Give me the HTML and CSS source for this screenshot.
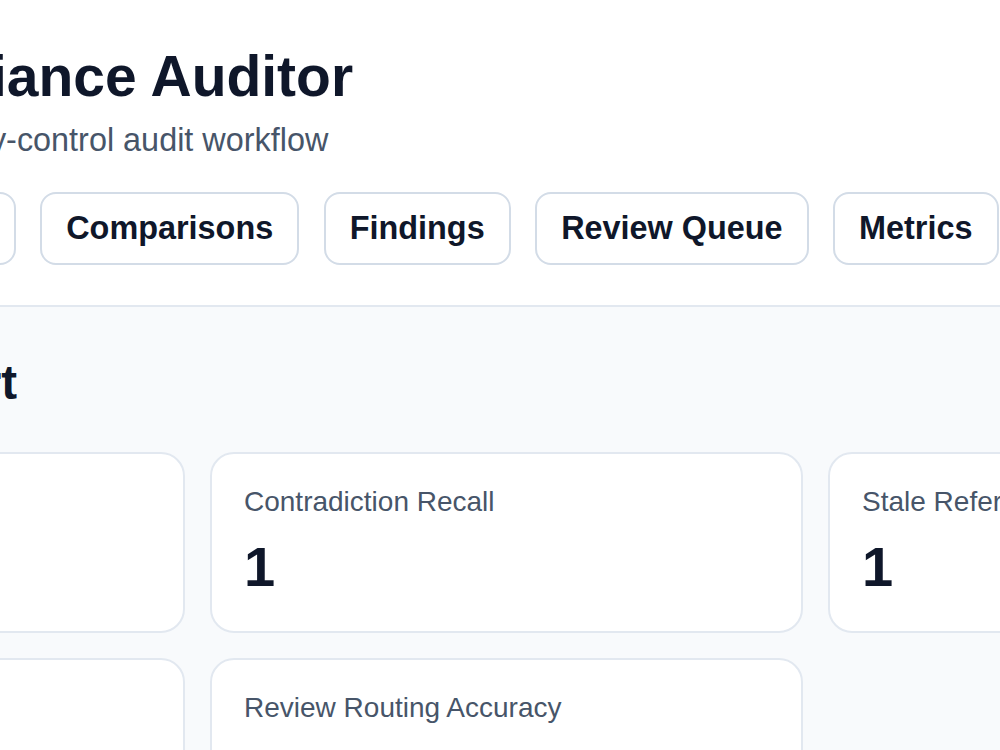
FILE: index.html
```html
<!DOCTYPE html>
<html lang="en">
<head>
  <meta charset="UTF-8" />
  <meta name="viewport" content="width=device-width, initial-scale=1.0" />
  <title>Privacy Compliance Auditor</title>
  <link rel="stylesheet" href="styles.css">
</head>
<body>

  <div class="page">

    <header class="header">
      <h1 class="title">Privacy Compliance Auditor</h1>
      <p class="subtitle">Grounded, multi-agent policy-control audit workflow</p>
    </header>

    <nav class="tabs">
      <button class="tab">Overview</button>
      <button class="tab">Mappings</button>
      <button class="tab">Comparisons</button>
      <button class="tab">Findings</button>
      <button class="tab">Review Queue</button>
      <button class="tab">Metrics</button>
    </nav>

    <!-- Metrics panel -->
    <section class="panel">
      <h2 class="panel-title">Benchmark Report</h2>

      <div class="metric-grid">
        <div class="metric-card">
          <div class="metric-label">Citation Precision</div>
          <div class="metric-value">1</div>
        </div>
        <div class="metric-card">
          <div class="metric-label">Contradiction Recall</div>
          <div class="metric-value">1</div>
        </div>
        <div class="metric-card">
          <div class="metric-label">Stale Reference Recall</div>
          <div class="metric-value">1</div>
        </div>
        <div class="metric-card">
          <div class="metric-label">Finding Precision</div>
          <div class="metric-value">1</div>
        </div>
        <div class="metric-card">
          <div class="metric-label">Review Routing Accuracy</div>
          <div class="metric-value">1</div>
        </div>
      </div>
    </section>

  </div>

</body>
</html>
```

FILE: styles.css
```css
* {
  margin: 0;
  padding: 0;
  box-sizing: border-box;
  font-family: 'Liberation Sans', Arial, sans-serif;
}
html, body {
  overflow: hidden;
}
body {
  background: #fff;
  color: #0f172a;
  height: 750px;
}
.page {
  margin-left: -408px;
  width: 1829px;
}
.header {
  padding-top: 43px;
}
.title {
  font-size: 57px;
  font-weight: bold;
  color: #0f172a;
  text-indent: 3px;
}
.subtitle {
  margin-top: 13px;
  font-size: 32.4px;
  color: #475569;
}
.tabs {
  display: flex;
  gap: 24.5px;
  margin-top: 33px;
}
.tab {
  flex: none;
  background: #fff;
  border: 2px solid #d3dce7;
  border-radius: 16px;
  padding: 16px 24px;
  font-size: 32.4px;
  font-weight: bold;
  color: #0f172a;
  cursor: pointer;
}
.tab:hover {
  background: #f1f5f9;
}
/* Metrics panel */
.panel {
  margin: 40px -48px 0;
  padding: 48px;
  background: #f8fafc;
  border-top: 2px solid #e2e8f0;
}
.panel-title {
  font-size: 47.5px;
  font-weight: bold;
  color: #0f172a;
  margin-bottom: 42px;
}
.metric-grid {
  display: grid;
  grid-template-columns: repeat(3, 1fr);
  gap: 25px;
}
.metric-card {
  background: #fff;
  border: 2px solid #e2e8f0;
  border-radius: 24px;
  padding: 32px;
}
.metric-label {
  font-size: 28px;
  color: #475569;
}
.metric-value {
  margin-top: 16px;
  font-size: 56px;
  font-weight: bold;
  color: #0f172a;
}
```
